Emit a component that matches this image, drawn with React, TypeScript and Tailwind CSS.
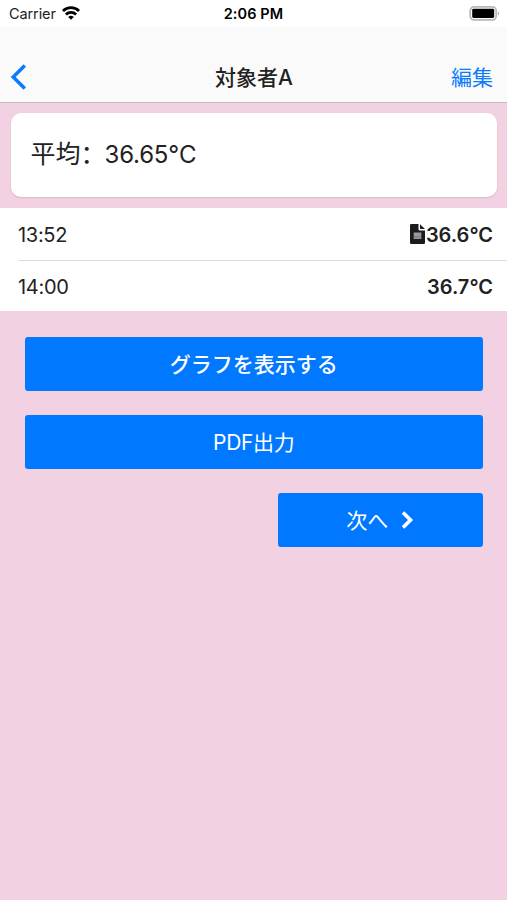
const temperatures = [
  { time: "13:52", value: "36.6°C", hasNote: true },
  { time: "14:00", value: "36.7°C", hasNote: false },
]

function StatusBar() {
  return (
    <div className="relative flex h-[27px] items-center justify-between bg-white pl-[9px] pr-[7px] text-[14.5px] text-[#222]">
      <div className="flex items-center gap-[6px]">
        <span className="tracking-[-0.1px]">Carrier</span>
        <svg className="-mt-[2px]" width="18" height="14" viewBox="0 0 18 14" fill="none" stroke="#000" strokeWidth="2.8">
          <path d="M0.900 5a11.600 11.600 0 0 1 16.200 0" />
          <path d="M3.900 8.500a7.300 7.300 0 0 1 10.200 0" />
          <path d="M9 13.700 6.200 11a4 4 0 0 1 5.600 0Z" fill="#000" stroke="none" />
        </svg>
      </div>
      <span className="absolute inset-x-0 text-center font-semibold tracking-[0.1px] text-black">2:06 PM</span>
      <svg width="31" height="15" viewBox="0 0 31 15">
        <rect x="1.200" y="0.900" width="26" height="13" rx="3.800" fill="#fff" stroke="#b8b8b8" strokeWidth="1.800" />
        <rect x="3.200" y="2.800" width="22" height="9.200" rx="1.400" fill="#000" />
        <path d="M28.800 5.200a2.600 2.600 0 0 1 0 4.400Z" fill="#a5a5a5" />
      </svg>
    </div>
  )
}

function Header() {
  return (
    <header className="relative flex h-[76px] items-center justify-between border-b border-[#c3bcc1] bg-[#fafafa] pl-[10px] pr-[14px] pt-[26px]">
      <svg className="-mt-[2px]" width="17" height="26" viewBox="0 0 17 26" fill="none" stroke="#0a7aff" strokeWidth="3.5">
        <path d="M14.800 1.500 3.200 13l11.600 11.500" />
      </svg>
      <h1 className="absolute inset-x-0 pl-px text-center text-[21px] font-medium text-[#222]">対象者A</h1>
      <button className="text-[21px] text-[#0a7aff]">編集</button>
    </header>
  )
}

function NoteIcon() {
  return (
    <svg className="-mt-[2px] mr-px" width="15" height="20" viewBox="0 0 15 20">
      <path
        d="M1.300 0H8.500v5.200a1.300 1.300 0 0 0 1.300 1.300H15v12.200a1.300 1.300 0 0 1-1.300 1.300H1.300A1.300 1.300 0 0 1 0 18.700V1.300A1.300 1.300 0 0 1 1.300 0Z"
        fill="#1c1c1e"
      />
      <path d="M10 0.200v4.900h5Z" fill="#1c1c1e" />
      <path d="M3.700 8.500h7.600v6.500H3.700Z" fill="#9a9a9a" />
      <path d="M3.700 12.900h7.600" stroke="#666" strokeWidth="0.700" />
    </svg>
  )
}

export default function App() {
  return (
    <div className="min-h-screen bg-[#f2d2e2] font-['Inter','Noto_Sans_CJK_JP',sans-serif] text-[#222]">
      <StatusBar />
      <Header />
      <main>
        <section className="mx-[10.5px] mt-[10px] h-[84px] rounded-[10px] bg-white pl-[20px] text-[25px] leading-[79px] shadow-[0_1px_2px_rgba(0,0,0,0.12)]">
          平均<span className="font-['Noto_Sans_CJK_SC',sans-serif]" lang="zh-CN">：</span>
          <span className="-ml-px text-[24px] tracking-[-0.2px]">36.65°C</span>
        </section>
        <ul className="mt-[11px] bg-white pl-[18px] text-[20px]">
          {temperatures.map((t) => (
            <li
              key={t.time}
              className="flex h-[53px] items-center justify-between border-b border-[#dedede] pr-[14px] pt-px last:h-[50px] last:border-b-0 last:pt-[2px]"
            >
              <span className="tracking-[-0.3px]">{t.time}</span>
              <span className="flex items-center font-semibold">
                {t.hasNote && <NoteIcon />}
                {t.value}
              </span>
            </li>
          ))}
        </ul>
        <div className="flex flex-col gap-[25px] pl-[25px] pr-[24.5px] pt-[26px] text-[21px] text-white">
          <button className="h-[53.5px] rounded-[3px] bg-[#0078ff] pt-[2px] font-medium">グラフを表示する</button>
          <button className="-mt-[0.5px] h-[53.5px] rounded-[3px] bg-[#0078ff] pt-[2px] tracking-[-0.3px]">PDF出力</button>
          <button className="-mt-[0.5px] flex h-[53.5px] w-[204.5px] items-center justify-center gap-[13px] self-end rounded-[3px] bg-[#0078ff]">
            <span className="pt-[2px]">次へ</span>
            <svg width="13" height="18" viewBox="0 0 13 18" fill="none" stroke="#fff" strokeWidth="3.600">
              <path d="m2 1.500 7.500 7.500L2 16.500" />
            </svg>
          </button>
        </div>
      </main>
    </div>
  )
}
